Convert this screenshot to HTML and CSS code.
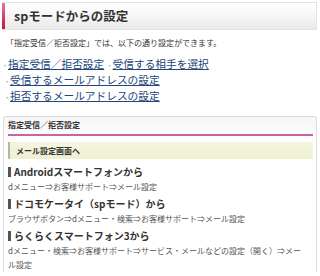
FILE: index.html
```html
<!DOCTYPE html>
<html lang="ja">
<head>
    <meta charset="UTF-8">
    <meta name="viewport" content="width=device-width, initial-scale=1.0">
    <title>spモードからの設定</title>
    <link rel="stylesheet" href="styles.css">
</head>
<body>

<!-- Page title -->
<h1 class="page-title">spモードからの設定</h1>

<p class="intro">「指定受信／拒否設定」では、以下の通り設定ができます。</p>

<!-- Links -->
<ul class="links">
    <li><span class="bullet">・</span><a href="#">指定受信／拒否設定</a> <span class="bullet">・</span><a href="#">受信する相手を選択</a></li>
    <li><span class="bullet">・</span><a href="#">受信するメールアドレスの設定</a></li>
    <li><span class="bullet">・</span><a href="#">拒否するメールアドレスの設定</a></li>
</ul>

<!-- Settings section -->
<div class="section">
    <h2 class="section-title">指定受信／拒否設定</h2>
    <div class="section-body">
        <div class="notice">メール設定画面へ</div>

        <h3 class="device">Androidスマートフォンから</h3>
        <p class="steps">dメニュー⇒お客様サポート⇒メール設定</p>

        <h3 class="device">ドコモケータイ（spモード）から</h3>
        <p class="steps">ブラウザボタン⇒dメニュー・検索⇒お客様サポート⇒メール設定</p>

        <h3 class="device">らくらくスマートフォン3から</h3>
        <p class="steps">dメニュー・検索⇒お客様サポート⇒サービス・メールなどの設定（開く）⇒メール設定</p>
    </div>
</div>

</body>
</html>
```

FILE: styles.css
```css
body {
    margin: 0;
    font-family: "Noto Sans CJK JP", "Noto Sans", sans-serif;
    background-color: #ffffff;
    color: #333333;
}

.page-title {
    margin: 2px 3px 0 2px;
    height: 26px;
    padding-left: 12px;
    border: 1px solid #e2e2e2;
    border-left: none;
    background:
        linear-gradient(#e07a98, #c8103f) left top / 3px 100% no-repeat,
        linear-gradient(#ffffff, #f7f7f7 45%, #e9e9e9);
    font-size: 12.5px;
    font-weight: bold;
    line-height: 26px;
    color: #333333;
}

.intro {
    margin: 7px 0 0 6px;
    font-size: 8px;
    line-height: 12px;
    color: #333333;
}

.links {
    list-style: none;
    margin: 7px 0 0 0;
    padding: 0 0 0 2px;
    font-size: 10.7px;
    line-height: 16px;
}

.links li {
    height: 16px;
}

.links li + li {
    padding-left: 2px;
}

.links a {
    color: #23457a;
    text-decoration: underline;
}

.bullet {
    display: inline-block;
    width: 6px;
    font-size: 6px;
    line-height: 6px;
    color: #888888;
}

.section {
    margin: 12px 3px 0 3px;
    border: 1px solid #dddddd;
    border-bottom: none;
    border-radius: 3px 3px 0 0;
    padding: 0 3px 0 4px;
    background: linear-gradient(#f6f6f6, #ffffff 30px);
}

.section-title {
    margin: 0;
    padding: 2px 0 3px 0;
    border-bottom: 2px solid #c9659a;
    font-size: 8px;
    line-height: 12px;
    font-weight: bold;
    color: #333333;
}

.section-body {
    padding-right: 5px;
}

.notice {
    margin: 6px -5px 0 0;
    padding-left: 6px;
    border-left: 2px solid #b5b5a5;
    background: linear-gradient(#f4f5dc, #eef0d4);
    font-size: 8px;
    font-weight: bold;
    line-height: 17px;
    color: #333333;
}

.device {
    margin: 0;
    padding-left: 3px;
    border-left: 3px solid #555555;
    font-size: 10px;
    font-weight: bold;
    line-height: 10px;
    color: #333333;
}

.notice + .device {
    margin-top: 8px;
}

.steps {
    margin: 3px 0 0 0;
    font-size: 8px;
    line-height: 14px;
    color: #555555;
}

.steps + .device {
    margin-top: 5px;
}
```
